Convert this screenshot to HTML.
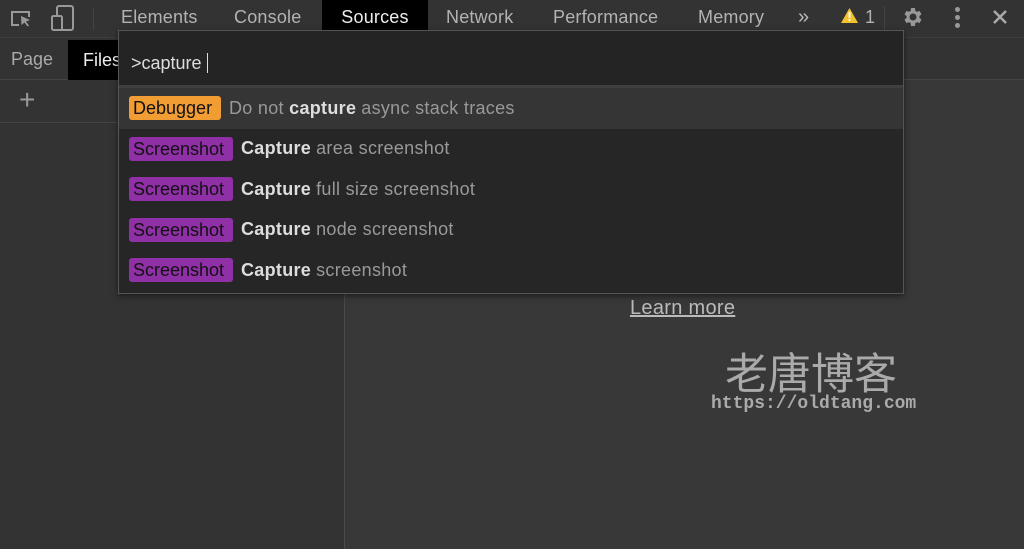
<!DOCTYPE html>
<html><head><meta charset="utf-8"><style>
*{margin:0;padding:0;box-sizing:border-box}
body{width:1024px;height:549px;overflow:hidden;background:#383838;font-family:"Liberation Sans",Arial,sans-serif;position:relative;color:#ccc}
.top{position:absolute;left:0;top:0;width:1024px;height:38px;background:#333;border-bottom:1px solid #3d3d3d}
.tab{position:absolute;top:0;height:38px;line-height:35px;font-size:18px;letter-spacing:0.2px;color:#b3b3b3}
.row2{position:absolute;left:0;top:38px;width:1024px;height:42px;background:#333;border-bottom:1px solid #444}
.left{position:absolute;left:0;top:80px;width:345px;height:469px;background:#333;border-right:1px solid #4a4a4a}
.dlg{position:absolute;left:118px;top:30px;width:786px;height:264px;background:#262626;border:1px solid #555;box-shadow:0 2px 6px rgba(0,0,0,.5)}
.inp{height:57px;background:#242424;border-bottom:3px solid #3f3f3f;font-size:18px;color:#ddd;padding:22px 0 0 12px}
.it{height:40.5px;display:flex;align-items:center;padding-left:10px;font-size:18px;letter-spacing:0.3px;color:#999}
.it b{color:#ddd;margin-right:5px}
.badge{display:inline-block;height:24px;line-height:24px;padding:0 4px;border-radius:3px;color:#111;margin-right:8px;letter-spacing:0}
.p{background:#8f30a6;width:104px}
.o{background:#f29d33;width:92px}
</style></head><body>
<div class="top">
<svg style="position:absolute;left:10px;top:6px" width="24" height="24" viewBox="0 0 24 24" fill="none" stroke="#999" stroke-width="2"><path d="M9 19H2V6h17v5"/><path d="M11 10l9 4-4 1.5 3 4-1.5 1-3-4-3 2.5z" fill="#999" stroke="none"/></svg>
<svg style="position:absolute;left:50px;top:4px" width="26" height="28" viewBox="0 0 26 28" fill="none" stroke="#999" stroke-width="2"><rect x="7" y="2" width="16" height="24" rx="2"/><rect x="2" y="12" width="10" height="14" rx="1.5" fill="#333"/></svg>
<div style="position:absolute;left:93px;top:8px;width:1px;height:22px;background:#444"></div>
<div class="tab" style="left:121px">Elements</div>
<div class="tab" style="left:234px">Console</div>
<div class="tab" style="left:322px;width:106px;background:#000;color:#eee;text-align:center">Sources</div>
<div class="tab" style="left:446px">Network</div>
<div class="tab" style="left:553px">Performance</div>
<div class="tab" style="left:698px">Memory</div>
<div class="tab" style="left:798px;font-size:20px;color:#bbb">»</div>
<svg style="position:absolute;left:841px;top:8px" width="17" height="15" viewBox="0 0 17 15"><path d="M8.5 0L17 15H0z" fill="#f2c12e"/><rect x="7.6" y="4" width="1.8" height="6" fill="#fff"/><rect x="7.6" y="11" width="1.8" height="2" fill="#fff"/></svg>
<div class="tab" style="left:865px">1</div>
<div style="position:absolute;left:884px;top:6px;width:1px;height:24px;background:#444"></div>
<svg style="position:absolute;left:901px;top:5px" width="24" height="24" viewBox="0 0 24 24"><path fill="#999" d="M19.4 13a7.5 7.5 0 000-2l2.1-1.6-2-3.5-2.5 1a7.5 7.5 0 00-1.7-1L15 3h-4l-.3 2.9a7.5 7.5 0 00-1.7 1l-2.5-1-2 3.5L6.6 11a7.5 7.5 0 000 2l-2.1 1.6 2 3.5 2.5-1a7.5 7.5 0 001.7 1L11 21h4l.3-2.9a7.5 7.5 0 001.7-1l2.5 1 2-3.5zM13 15.5a3.5 3.5 0 110-7 3.5 3.5 0 010 7z" transform="translate(-1 0)"/></svg>
<div style="position:absolute;left:955px;top:7px;width:5px;height:5px;border-radius:50%;background:#999;box-shadow:0 8px 0 #999,0 16px 0 #999"></div>
<svg style="position:absolute;left:992px;top:9px" width="16" height="16" viewBox="0 0 16 16" stroke="#aaa" stroke-width="2.4"><path d="M2 2l12 12M14 2L2 14"/></svg>
</div>
<div class="row2">
<div style="position:absolute;left:11px;top:11px;font-size:18px;color:#aaa">Page</div>
<div style="position:absolute;left:68px;top:2px;width:60px;height:40px;background:#000;color:#eee;font-size:18px;padding:10px 0 0 15px">Files</div>
</div>
<div class="left">
<div style="position:absolute;left:19px;top:7px;font-size:28px;color:#999;line-height:26px">+</div>
<div style="position:absolute;left:0;top:42px;width:345px;height:1px;background:#444"></div>
</div>
<div style="position:absolute;left:630px;top:297px;font-size:20px;letter-spacing:0.3px;color:#bbb;text-decoration:underline">Learn more</div>
<div style="position:absolute;left:725px;top:343px;font-size:43px;color:#aaa;font-family:'Noto Sans CJK SC',sans-serif;line-height:56px">老唐博客</div>
<div style="position:absolute;left:711px;top:394px;font-size:18px;color:#aaa;font-weight:bold;font-family:'Liberation Mono',monospace">https://oldtang.com</div>
<div class="dlg">
<div class="inp">&gt;capture <span style="display:inline-block;width:1px;height:20px;background:#ddd;vertical-align:-4px"></span></div>
<div class="it" style="background:#353535"><span class="badge o">Debugger</span>Do not&nbsp;<b>capture</b>async stack traces</div>
<div class="it"><span class="badge p">Screenshot</span><b>Capture</b>area screenshot</div>
<div class="it"><span class="badge p">Screenshot</span><b>Capture</b>full size screenshot</div>
<div class="it"><span class="badge p">Screenshot</span><b>Capture</b>node screenshot</div>
<div class="it"><span class="badge p">Screenshot</span><b>Capture</b>screenshot</div>
</div>
</body></html>
